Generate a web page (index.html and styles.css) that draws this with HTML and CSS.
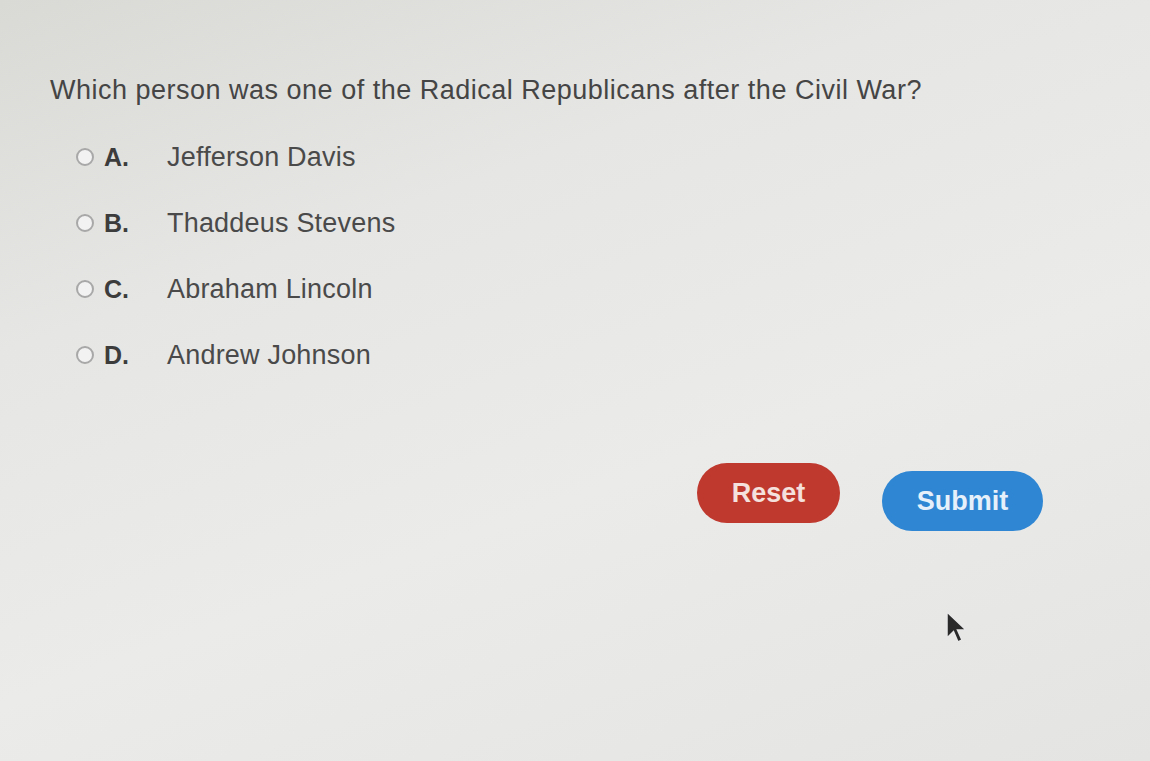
FILE: index.html
```html
<!DOCTYPE html>
<html>
<head>
<meta charset="utf-8">
<link rel="stylesheet" href="styles.css">
</head>
<body>
<div class="page">
  <div class="question">Which person was one of the Radical Republicans after the Civil War?</div>
  <div class="options">
    <label class="option"><span class="radio"></span><span class="letter">A.</span><span class="answer">Jefferson Davis</span></label>
    <label class="option"><span class="radio"></span><span class="letter">B.</span><span class="answer">Thaddeus Stevens</span></label>
    <label class="option"><span class="radio"></span><span class="letter">C.</span><span class="answer">Abraham Lincoln</span></label>
    <label class="option"><span class="radio"></span><span class="letter">D.</span><span class="answer">Andrew Johnson</span></label>
  </div>
  <div class="actions">
    <button class="btn reset">Reset</button>
    <button class="btn submit">Submit</button>
  </div>
  <svg class="cursor" width="28" height="36" viewBox="0 0 28 36"><path d="M2 2 L2 28 L8.5 21.5 L13 32 L17 30 L12.5 20 L21 20 Z" fill="#2a2a2a" stroke="#e8e8e8" stroke-width="1.5"/></svg>
</div>
</body>
</html>
```
FILE: styles.css
```css
html, body {
  margin: 0;
  padding: 0;
}
body {
  width: 1150px;
  height: 761px;
  overflow: hidden;
  background: linear-gradient(160deg, #d9d9d6 0%, #e6e6e4 30%, #ebebea 60%, #e4e4e3 100%);
  font-family: "Liberation Sans", Arial, sans-serif;
  color: #4a4a4a;
}
.page {
  position: relative;
  height: 761px;
  padding: 73px 0 0 50px;
  box-sizing: border-box;
}
.question {
  font-size: 27px;
  letter-spacing: 0.5px;
  color: #454545;
  line-height: 34px;
}
.options {
  display: flex;
  flex-direction: column;
  gap: 32px;
  margin-top: 33px;
  padding-left: 26px;
}
.option {
  display: flex;
  align-items: center;
  height: 34px;
  font-size: 27px;
  color: #4a4a4a;
}
.radio {
  width: 18px;
  height: 18px;
  border: 2px solid #a8a8a8;
  border-radius: 50%;
  background: #f2f2f2;
  box-sizing: border-box;
  margin-right: 10px;
}
.letter {
  width: 63px;
  font-weight: bold;
  color: #3c3c3c;
  font-size: 25px;
}
.answer {
  letter-spacing: 0.2px;
}
.actions {
  display: flex;
  gap: 42px;
  margin-top: 91px;
  margin-left: 647px;
  align-items: flex-start;
}
.btn {
  border: none;
  border-radius: 30px;
  height: 60px;
  color: #fff;
  font-family: "Liberation Sans", Arial, sans-serif;
  font-weight: bold;
  font-size: 27px;
  padding: 0;
}
.reset {
  width: 143px;
  background: #c0392f;
  color: #f4e0dc;
}
.submit {
  width: 161px;
  background: #2f87d3;
  margin-top: 8px;
  color: #e6f0fa;
}
.cursor {
  position: absolute;
  left: 945px;
  top: 610px;
}
```
